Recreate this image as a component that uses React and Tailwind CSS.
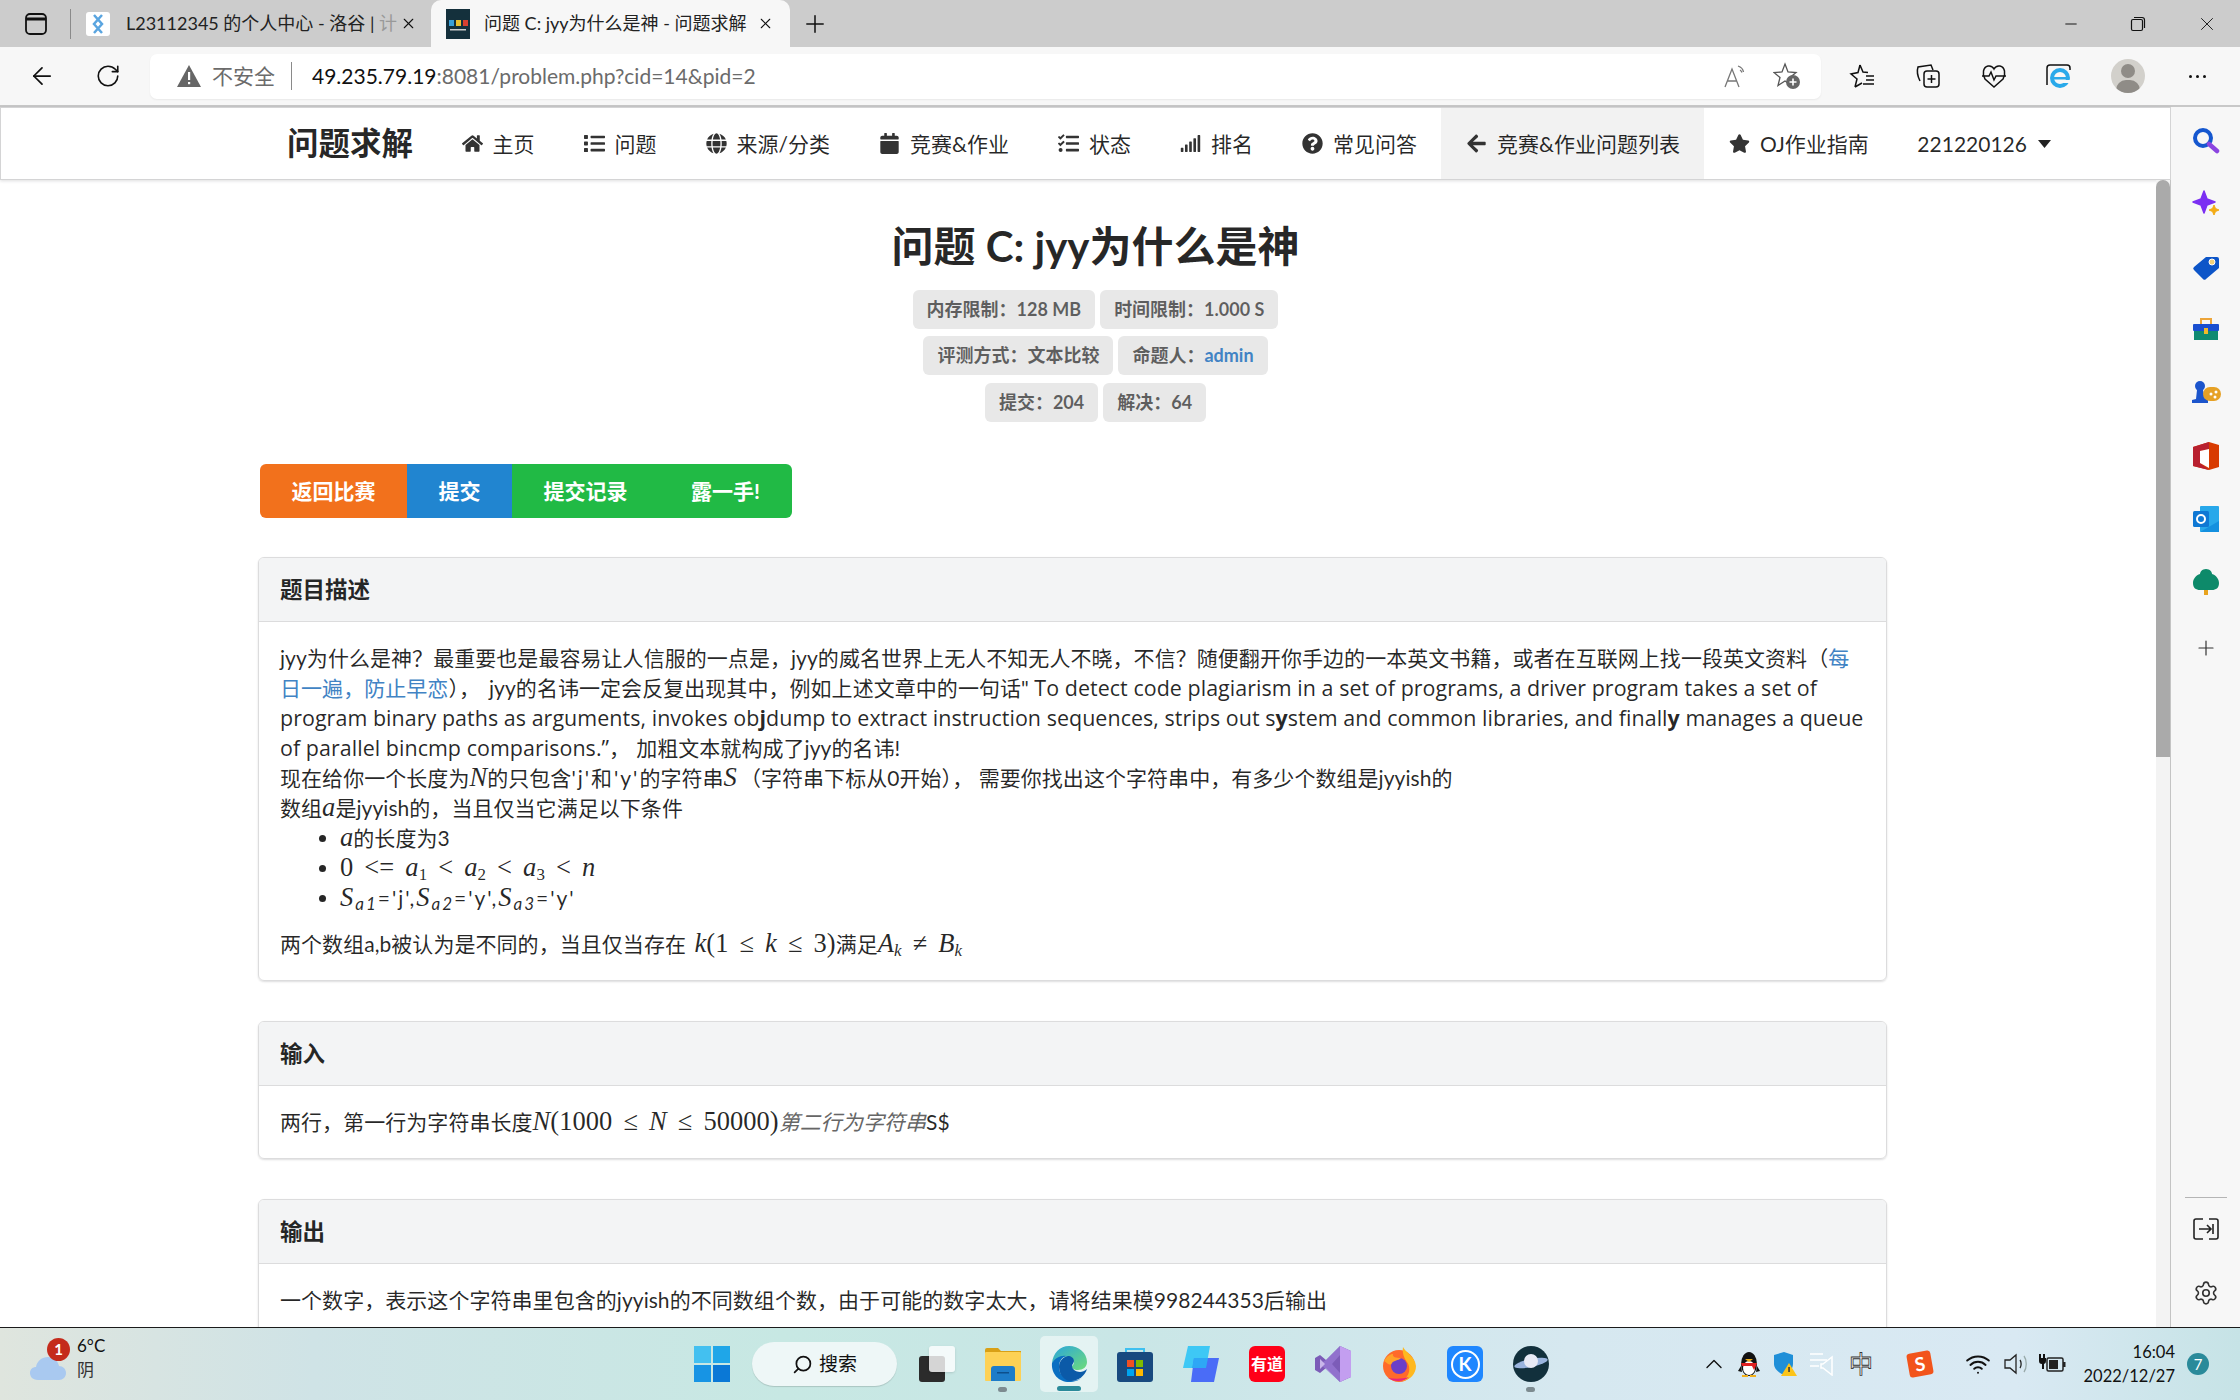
import { ArrowLeft, RotateCw, Plus, X, Minus, Search, ChevronUp, Settings, Wifi } from "lucide-react";
import {
  FaHome,
  FaList,
  FaGlobe,
  FaCalendar,
  FaTasks,
  FaSignal,
  FaQuestionCircle,
  FaArrowLeft,
  FaStar,
} from "react-icons/fa";

const navItems = [
  { icon: FaHome, label: "主页" },
  { icon: FaList, label: "问题" },
  { icon: FaGlobe, label: "来源/分类" },
  { icon: FaCalendar, label: "竞赛&作业" },
  { icon: FaTasks, label: "状态" },
  { icon: FaSignal, label: "排名" },
  { icon: FaQuestionCircle, label: "常见问答" },
  { icon: FaArrowLeft, label: "竞赛&作业问题列表", active: true },
  { icon: FaStar, label: "OJ作业指南" },
];

function M({ children, className = "" }) {
  return <span className={"[font-family:'Liberation_Serif',serif] text-[26.5px] leading-none " + className}>{children}</span>;
}

function I({ children }) {
  return <M className="italic">{children}</M>;
}

function Sub({ children }) {
  return <sub className="text-[17px] italic">{children}</sub>;
}

// relation sign with the spacing a math renderer puts round it
function Rel({ children }) {
  return <span className="mx-[11px]">{children}</span>;
}

function En({ children }) {
  return <span className="[font-family:'Open_Sans',sans-serif] text-[21.45px]">{children}</span>;
}

function Label({ children }) {
  return (
    <span className="inline-flex h-[39px] items-center rounded-[6px] bg-[#e8e8e8] px-[14px] text-[18px] font-bold text-black/60">
      {children}
    </span>
  );
}

function Card({ title, children }) {
  return (
    <section className="mb-[40px] overflow-hidden rounded-[6px] border border-[#dcdcdd] shadow-[0_1px_2px_rgba(34,36,38,0.15)]">
      <h3 className="flex h-[64px] items-center border-b border-[#dcdcdd] bg-[#f3f4f5] px-[21px] text-[22.5px] font-bold text-black/85">
        {title}
      </h3>
      <div className="p-[21px] text-[21px] leading-[30px] tracking-[0.05px] whitespace-nowrap text-black/85">{children}</div>
    </section>
  );
}

function Nav() {
  return (
    <nav className="flex h-[73px] shrink-0 items-center border border-[#d4d4d5] bg-white pl-[286px] text-[21px] text-black/85 shadow-[0_1px_3px_rgba(34,36,38,0.15)]">
      <span className="mr-[24px] text-[31.5px] font-bold">问题求解</span>
      {navItems.map(({ icon: Icon, label, active }) => (
        <a
          key={label}
          className={
            "flex h-[71px] items-center gap-[10px] px-[24.5px] " + (active ? "bg-[#f2f2f2]" : "")
          }
        >
          <Icon className="size-[21px] text-[#333]" />
          {label}
        </a>
      ))}
      <span className="ml-[24px] flex items-center gap-[11px]">
        221220126
        <svg width="13" height="8" viewBox="0 0 13 8">
          <path d="M0 0h13L6.5 8z" fill="#222" />
        </svg>
      </span>
    </nav>
  );
}

function Problem() {
  return (
    <main className="min-w-0 flex-1 overflow-hidden pt-[40px] pr-[269px] pl-[258px]">
      <div className="flex flex-col items-center pl-[46px]">
        <h1 className="mb-[18px] text-[42px] leading-[52px] font-bold text-black/85">问题 C: jyy为什么是神</h1>
        <div className="flex gap-[5px]">
          <Label>内存限制：128 MB</Label>
          <Label>时间限制：1.000 S</Label>
        </div>
        <div className="mt-[7px] flex gap-[5px]">
          <Label>评测方式：文本比较</Label>
          <Label>
            命题人：<span className="text-[#4183c4]">admin</span>
          </Label>
        </div>
        <div className="mt-[8px] flex gap-[5px]">
          <Label>提交：204</Label>
          <Label>解决：64</Label>
        </div>
      </div>

      <div className="mt-[42px] mb-[39px] ml-[2px] flex h-[54px] w-fit overflow-hidden rounded-[6px] text-[21px] font-bold text-white">
        <a className="flex items-center bg-[#f2711c] px-[31.5px]">返回比赛</a>
        <a className="flex items-center bg-[#2185d0] px-[31.5px]">提交</a>
        <a className="flex items-center bg-[#21ba45] px-[31.5px]">提交记录</a>
        <a className="flex items-center bg-[#21ba45] px-[32px]">露一手!</a>
      </div>

      <Card title="题目描述">
        <div>
          jyy为什么是神？最重要也是最容易让人信服的一点是，jyy的威名世界上无人不知无人不晓，不信？随便翻开你手边的一本英文书籍，或者在互联网上找一段英文资料（
          <a className="text-[#4183c4]">每</a>
        </div>
        <div>
          <a className="text-[#4183c4]">日一遍，防止早恋</a>），<span className="ml-[9px]">jyy的名讳一定会反复出现其中，例如上述文章中的一句话" </span>
          <En>To detect code plagiarism in a set of programs, a driver program takes a set of</En>
        </div>
        <div>
          <En>
            program binary paths as arguments, invokes ob<b>j</b>dump to extract instruction sequences, strips out s<b>y</b>stem and common libraries, and finall<b>y</b> manages a queue
          </En>
        </div>
        <div>
          <En>of parallel bincmp comparisons.”</En>，<span className="ml-[6px]">加粗文本就构成了jyy的名讳!</span>
        </div>
        <div>
          现在给你一个长度为<I>N</I>的只包含<span className="tracking-[2px]">'j'和'y'</span>的字符串
          <M className="pr-[3px] italic">S</M>（字符串下标从0开始）， 需要你找出这个字符串中，有多少个数组是jyyish的
        </div>
        <div>
          数组<I>a</I>是jyyish的，当且仅当它满足以下条件
        </div>
        <ul className="mb-[16px] list-disc pl-[60px]">
          <li>
            <I>a</I>的长度为3
          </li>
          <li>
            <M>
              0<Rel>&lt;=</Rel>
              <i>a</i>
              <sub className="text-[17px]">1</sub>
              <Rel>&lt;</Rel>
              <i>a</i>
              <sub className="text-[17px]">2</sub>
              <Rel>&lt;</Rel>
              <i>a</i>
              <sub className="text-[17px]">3</sub>
              <Rel>&lt;</Rel>
              <i>n</i>
            </M>
          </li>
          <li className="tracking-[2px]">
            <I>S</I>
            <Sub>a1</Sub>='j',<I>S</I>
            <Sub>a2</Sub>='y',<I>S</I>
            <Sub>a3</Sub>='y'
          </li>
        </ul>
        <div>
          两个数组a,b被认为是不同的，当且仅当存在{" "}
          <M className="ml-[3px]">
            <i>k</i>(1<Rel>≤</Rel>
            <i>k</i>
            <Rel>≤</Rel>3)
          </M>
          满足
          <M>
            <i>A</i>
            <Sub>k</Sub>
            <Rel>≠</Rel>
            <i>B</i>
            <Sub>k</Sub>
          </M>
        </div>
      </Card>

      <Card title="输入">
        两行，第一行为字符串长度
        <M>
          <i>N</i>(1000<Rel>≤</Rel>
          <i>N</i>
          <Rel>≤</Rel>50000)
        </M>
        <i className="text-[#666]">第二行为字符串</i>S$
      </Card>

      <Card title="输出">一个数字，表示这个字符串里包含的jyyish的不同数组个数，由于可能的数字太大，请将结果模998244353后输出</Card>
    </main>
  );
}

function Scrollbar() {
  return (
    <div className="flex w-[15px] shrink-0 flex-col border-r border-[#c4c4c4] bg-[#f3f3f3]">
      <div className="h-[577px] rounded-t-[7px] bg-[#aaaaaa]" />
    </div>
  );
}

function SideIcon({ children }) {
  return <div className="flex h-[28px] w-[36px] items-center justify-center">{children}</div>;
}

function Sidebar() {
  return (
    <aside className="flex w-[69px] shrink-0 flex-col items-center bg-[#f7f7f7] pt-[20px]">
      <div className="flex flex-col items-center gap-[35px]">
        <SideIcon>
          <svg width="28" height="28" viewBox="0 0 28 28" fill="none">
            <circle cx="11" cy="11" r="8" stroke="#1557cf" strokeWidth="4" />
            <path d="M17 17l8 7" stroke="#8b45e0" strokeWidth="4.5" strokeLinecap="round" />
          </svg>
        </SideIcon>
        <SideIcon>
          <svg width="28" height="28" viewBox="0 0 28 28">
            <path d="M12 1l3 8 8 3-8 3-3 8-3-8-8-3 8-3z" fill="#7b2ff2" stroke="#7b2ff2" strokeWidth="1.500" strokeLinejoin="round" />
            <path d="M22 15l1.500 3.500L27 20l-3.500 1.500L22 25l-1.500-3.500L17 20l3.500-1.500z" fill="#f3ac16" stroke="#f3ac16" strokeWidth="1" strokeLinejoin="round" />
          </svg>
        </SideIcon>
        <SideIcon>
          <svg width="28" height="28" viewBox="0 0 28 28">
            <path d="M14 4h11a2 2 0 0 1 2 2v9L14 26a2 2 0 0 1-3 0L2 17a2 2 0 0 1 0-3z" fill="#0d55c8" />
            <circle cx="20" cy="9" r="3" fill="#f3d27a" stroke="#fff" />
          </svg>
        </SideIcon>
        <SideIcon>
          <svg width="28" height="28" viewBox="0 0 28 28">
            <path d="M9 8V3h10v5" fill="none" stroke="#eda53a" strokeWidth="2" />
            <rect x="1" y="8" width="26" height="7" rx="1" fill="#1a4fd0" />
            <rect x="2" y="15" width="24" height="9" fill="#0f8a72" />
            <rect x="12" y="12" width="4" height="6" fill="#f3b92a" />
          </svg>
        </SideIcon>
        <SideIcon>
          <svg width="30" height="28" viewBox="0 0 30 28">
            <circle cx="9" cy="7" r="5" fill="#1c55cc" />
            <path d="M6 11h6l2 9h3v4H1v-3l4-1z" fill="#1c55cc" />
            <rect x="12" y="8" width="18" height="14" rx="7" fill="#e6a125" />
            <circle cx="20" cy="15" r="1.500" fill="#fff" />
            <circle cx="25" cy="13" r="1.500" fill="#fff" />
            <circle cx="24" cy="18" r="1.500" fill="#fff" />
          </svg>
        </SideIcon>
        <SideIcon>
          <svg width="26" height="28" viewBox="0 0 26 28">
            <path d="M16 0l10 3v22l-10 3-16-4V5z" fill="#d83b01" />
            <path d="M0 5l16-5v7L7 9v12l9 7-16-4z" fill="#b8202f" />
            <path d="M7 9l9-2v19l-9-5z" fill="#fff" />
          </svg>
        </SideIcon>
        <SideIcon>
          <svg width="26" height="26" viewBox="0 0 26 26">
            <rect x="7" y="0" width="19" height="26" rx="1" fill="#28a8ea" />
            <path d="M7 26l19-11v11z" fill="#1490df" />
            <rect x="0" y="5" width="16" height="16" rx="1.500" fill="#0f78d4" />
            <circle cx="8" cy="13" r="4" fill="none" stroke="#fff" strokeWidth="2" />
          </svg>
        </SideIcon>
        <SideIcon>
          <svg width="28" height="28" viewBox="0 0 28 28">
            <rect x="12" y="21" width="4" height="6" fill="#e8a31e" />
            <path d="M14 1c4 0 6 3 6 5 4 1 7 5 7 9 0 5-3 7-7 7H8c-4 0-7-2-7-7 0-4 3-8 7-9 0-2 2-5 6-5z" fill="#0d8a6a" />
          </svg>
        </SideIcon>
        <div className="mt-[3px]">
          <SideIcon>
            <Plus size={24} strokeWidth={1.2} className="text-[#333]" />
          </SideIcon>
        </div>
      </div>
      <div className="mt-auto flex flex-col items-center pb-[21px]">
        <div className="mb-[20px] h-px w-[42px] bg-[#b5b5b5]" />
        <svg width="26" height="22" viewBox="0 0 26 22" fill="none" stroke="#222" strokeWidth="1.600" className="mb-[40px]">
          <path d="M10 1H3a2 2 0 0 0-2 2v16a2 2 0 0 0 2 2h7M16 1h7a2 2 0 0 1 2 2v16a2 2 0 0 1-2 2h-7" />
          <path d="M6 11h12M14 7l4 4-4 4M20 6v10" />
        </svg>
        <Settings size={26} strokeWidth={1.5} className="text-[#333]" />
      </div>
    </aside>
  );
}

function TabBar() {
  return (
    <div className="flex h-[47px] shrink-0 items-center bg-[#cccccc] pl-[25px] text-[18px] text-[#222]">
      <svg width="22" height="22" viewBox="0 0 22 22" fill="none">
        <rect x="1" y="1" width="20" height="20" rx="4" stroke="#111" strokeWidth="1.800" />
        <path d="M1 6h20" stroke="#111" strokeWidth="3" />
      </svg>
      <div className="ml-[23px] h-[30px] w-px bg-[#8a8a8a]" />
      <div className="ml-[15px] flex h-[24px] w-[24px] items-center justify-center rounded-[3px] bg-white">
        <svg width="14" height="22" viewBox="0 0 14 22" fill="none" stroke="#5aa5e0" strokeWidth="2.500">
          <path d="M3 2l8 9-8 9M11 2L3 11l8 9" />
        </svg>
      </div>
      <div className="ml-[16px] w-[261px] whitespace-nowrap">
        L23112345 的个人中心 - 洛谷 | <span className="text-[#999]">计</span>
      </div>
      <X size={17} strokeWidth={1.5} className="ml-[13px] text-[#111]" />
      <div className="ml-[14px] flex h-[47px] w-[359px] items-center rounded-t-[10px] bg-[#f7f7f7] pl-[15px]">
        <svg width="24" height="30" viewBox="0 0 24 30">
          <rect width="24" height="30" fill="#14303c" />
          <rect x="3" y="11" width="5" height="6" fill="#3aa0d8" />
          <rect x="10" y="11" width="5" height="6" fill="#e8c030" />
          <rect x="17" y="11" width="5" height="6" fill="#d84030" />
          <rect x="4" y="20" width="16" height="1.500" fill="#ccc" />
        </svg>
        <span className="ml-[14px] whitespace-nowrap">问题 C: jyy为什么是神 - 问题求解</span>
        <X size={17} strokeWidth={1.5} className="ml-auto mr-[16px] text-[#111]" />
      </div>
      <Plus size={28} strokeWidth={1.3} className="ml-[11px] text-[#111]" />
      <div className="ml-auto flex items-center">
        <Minus size={18} strokeWidth={1.3} className="mr-[50px] text-[#111]" />
        <svg width="16" height="16" viewBox="0 0 16 16" fill="none" stroke="#111" strokeWidth="1.200" className="mr-[50px]">
          <rect x="1.500" y="3.500" width="11" height="11" rx="1.500" />
          <path d="M4 1.500h8a2.500 2.500 0 0 1 2.500 2.500v8" />
        </svg>
        <X size={22} strokeWidth={1} className="mr-[22px] text-[#111]" />
      </div>
    </div>
  );
}

function Toolbar() {
  return (
    <div className="flex h-[60px] shrink-0 items-center border-b-2 border-[#c8c8c8] bg-[#f7f7f7]">
      <ArrowLeft size={28} strokeWidth={1.5} className="ml-[28px] text-[#111]" />
      <RotateCw size={26} strokeWidth={1.5} className="ml-[39px] text-[#111]" />
      <div className="ml-[29px] flex h-[45px] w-[1671px] items-center rounded-[7px] bg-white pl-[27px] shadow-[0_1px_2px_rgba(0,0,0,0.06)]">
        <svg width="24" height="22" viewBox="0 0 24 22">
          <path d="M12 0l12 22H0z" fill="#666" />
          <rect x="11" y="7" width="2.200" height="8" fill="#fff" />
          <rect x="11" y="17" width="2.200" height="2.200" fill="#fff" />
        </svg>
        <span className="ml-[11px] text-[21px] text-[#6b6b6b]">不安全</span>
        <div className="ml-[16px] h-[28px] w-px bg-[#8a8a8a]" />
        <span className="ml-[20px] text-[21px] text-[#111]">
          49.235.79.19<span className="text-[#6b6b6b]">:8081/problem.php?cid=14&amp;pid=2</span>
        </span>
        <div className="ml-auto flex items-center gap-[24px] pr-[20px]">
          <svg width="26" height="26" viewBox="0 0 26 26" fill="none" stroke="#777" strokeWidth="1.300">
            <path d="M2 24L9 6l7 18M4.500 18h9" />
            <path d="M15 3c3 1 5 3 5.500 6M17 7c1 .5 1.500 1.500 2 2.500" />
          </svg>
          <svg width="28" height="28" viewBox="0 0 28 28" fill="none" stroke="#555" strokeWidth="1.300">
            <path d="M12 2l3 8 8 .5-6 5 2 8-7-4.500L5 23.500l2-8-6-5 8-.5z" />
            <circle cx="20" cy="20" r="7" fill="#666" stroke="none" />
            <path d="M20 16.500v7M16.500 20h7" stroke="#fff" strokeWidth="1.600" />
          </svg>
        </div>
      </div>
      <div className="ml-[28px] flex items-center text-[#111]">
        <svg width="26" height="26" viewBox="0 0 26 26" fill="none" stroke="#111" strokeWidth="1.500" className="mr-[40px]">
          <path d="M11 2l3 7 5 .5M6 24l2-8-6-5 7-1.500L11 2M6 24l7-4" />
          <path d="M17 13h8M17 17h8M14 21h11" />
        </svg>
        <svg width="26" height="26" viewBox="0 0 26 26" fill="none" stroke="#111" strokeWidth="1.500" className="mr-[40px]">
          <path d="M5 18C2 12 2 7 3 4l13-2 2 5" />
          <rect x="9" y="8" width="15" height="16" rx="3" />
          <path d="M16.500 12v8M12.500 16h8" />
        </svg>
        <svg width="26" height="26" viewBox="0 0 26 26" fill="none" stroke="#111" strokeWidth="1.500" className="mr-[39px]">
          <path d="M4 16C1 11 2 4 7 3c3-.5 5 1 6 3 1-2 3-3.500 6-3 5 1 6 8 3 13l-9 8z" />
          <path d="M1 13h7l2-4 3 8 2-4h10" />
        </svg>
        <svg width="26" height="26" viewBox="0 0 26 26" className="mr-[39px]">
          <path d="M1 22V5a3 3 0 0 1 3-3h17a3 3 0 0 1 3 3v2" fill="none" stroke="#111" strokeWidth="1.500" />
          <circle cx="14" cy="15" r="8" fill="none" stroke="#29a9ea" strokeWidth="4" />
          <rect x="8" y="14" width="13" height="2.500" fill="#29a9ea" />
          <rect x="16" y="17" width="8" height="3" fill="#f7f7f7" />
        </svg>
        <div className="relative mr-[44px] size-[34px] overflow-hidden rounded-full bg-[#d2d0cb]">
          <div className="absolute top-[5px] left-[10px] size-[14px] rounded-full bg-[#8f8c87]" />
          <div className="absolute top-[21px] left-[5px] h-[20px] w-[24px] rounded-full bg-[#8f8c87]" />
        </div>
        <div className="flex gap-[4px]">
          <div className="size-[3px] rounded-full bg-[#111]" />
          <div className="size-[3px] rounded-full bg-[#111]" />
          <div className="size-[3px] rounded-full bg-[#111]" />
        </div>
      </div>
    </div>
  );
}

function AppSlot({ children, dot }) {
  return (
    <div className="relative flex h-[56px] w-[66px] items-center justify-center">
      {children}
      {dot && <div className="absolute bottom-0 left-[28px] h-[5px] w-[9px] rounded-full bg-[#7d8b90]" />}
    </div>
  );
}

function EdgeLogo() {
  return (
    <svg width="36" height="36" viewBox="0 0 36 36">
      <defs>
        <linearGradient id="edgeTop" x1="0" y1="0" x2="1" y2="1">
          <stop offset="0" stopColor="#2aa5dc" />
          <stop offset="1" stopColor="#6fdc7a" />
        </linearGradient>
      </defs>
      <path d="M1 17C2 7 9 0 18 0c10 0 18 7 18 16 0 5-4 8-9 8-4 0-7-2-6-4 1-1 2-2 2-4 0-4-5-6-10-5C7 12 3 14 1 17z" fill="url(#edgeTop)" />
      <path d="M1 17c3-5 9-8 14-7-5 2-7 6-7 11 0 6 4 11 10 13 6 1 11 0 14-3-3 3-9 5-14 5C8 36 0 28 1 17z" fill="#0a6fc2" />
      <path d="M8 21c0-6 4-10 9-11 3 0 6 2 6 5 0 2-2 3-2 5 0 3 4 6 8 6 2 0 5-1 7-3-2 7-9 12-16 12C14 35 8 29 8 21z" fill="#0b5aa8" />
    </svg>
  );
}

function Taskbar() {
  return (
    <footer className="flex h-[73px] shrink-0 items-center border-t border-[#1b1b1b] bg-[linear-gradient(90deg,#dfe5de_0%,#cfe3e6_14%,#c7e8e3_35%,#c9e6e6_50%,#d6e8f0_70%,#d9e9f3_90%,#c6e3e6_100%)] text-[#111]">
      <div className="relative ml-[30px] w-[649px] shrink-0">
        <svg width="36" height="24" viewBox="0 0 36 24" className="mt-[8px]">
          <path d="M8 24C2 24 0 20 0 17c0-4 3-6 6-6 1-6 6-10 12-10 6 0 10 4 11 9 4 0 7 3 7 7s-3 7-7 7z" fill="#a9c9f0" />
        </svg>
        <div className="absolute top-[-10px] left-[17px] flex size-[23px] items-center justify-center rounded-full bg-[#c42b1c] text-[15px] font-bold text-white">
          1
        </div>
        <div className="absolute top-[-14px] left-[47px] text-[17px] leading-[24px]">
          6°C
          <div className="text-[#333]">阴</div>
        </div>
      </div>
      <AppSlot>
        <svg width="36" height="36" viewBox="0 0 36 36">
          <rect width="17" height="17" fill="#43c0f0" />
          <rect x="19" width="17" height="17" fill="#1fa6e8" />
          <rect y="19" width="17" height="17" fill="#1794e4" />
          <rect x="19" y="19" width="17" height="17" fill="#0a78d6" />
        </svg>
      </AppSlot>
      <div className="ml-[7px] flex h-[44px] w-[145px] items-center justify-center gap-[6px] rounded-full bg-[#eef7f7] text-[19px] shadow-[0_1px_1px_rgba(0,0,0,0.15)]">
        <Search size={21} strokeWidth={2} className="-scale-x-100" />
        搜索
      </div>
      <div className="ml-[7px] flex">
        <AppSlot>
          <div className="relative size-[36px]">
            <div className="absolute bottom-0 left-0 size-[26px] rounded-[3px] bg-[#2b2b2b]" />
            <div className="absolute top-0 right-0 size-[26px] rounded-[3px] bg-white/80 shadow-sm" />
          </div>
        </AppSlot>
        <AppSlot dot>
          <svg width="36" height="34" viewBox="0 0 36 34">
            <path d="M0 3a2 2 0 0 1 2-2h11l3 3h20v4H0z" fill="#d9a016" />
            <rect y="5" width="36" height="29" rx="1" fill="#fdd155" />
            <path d="M6 34V22a3 3 0 0 1 3-3h18a3 3 0 0 1 3 3v12z" fill="#1d7cc9" />
            <rect x="12" y="25" width="12" height="1.500" fill="#0d4f8c" />
          </svg>
        </AppSlot>
        <div className="relative flex h-[56px] w-[66px] items-center justify-center">
          <div className="absolute inset-x-[4px] inset-y-0 rounded-[5px] bg-white/50" />
          <div className="relative">
            <EdgeLogo />
          </div>
          <div className="absolute bottom-[1px] left-[21px] h-[5px] w-[24px] rounded-full bg-[#2a8a9a]" />
        </div>
        <AppSlot>
          <svg width="36" height="36" viewBox="0 0 36 36">
            <path d="M9 9V3h18v6" fill="none" stroke="#3fc0f0" strokeWidth="2" />
            <rect y="6" width="36" height="30" rx="3" fill="#18497f" />
            <rect x="10" y="14" width="7" height="7" fill="#f25022" />
            <rect x="19" y="14" width="7" height="7" fill="#7fba00" />
            <rect x="10" y="23" width="7" height="7" fill="#00a4ef" />
            <rect x="19" y="23" width="7" height="7" fill="#ffb900" />
          </svg>
        </AppSlot>
        <AppSlot>
          <svg width="36" height="36" viewBox="0 0 36 36">
            <path d="M5 0h22l-4 22H0z" fill="#3ec8f5" />
            <path d="M11 12h25l-5 24H8z" fill="#4a6cf7" />
            <path d="M11 12h14l-2 10H9z" fill="#2ea7f5" />
          </svg>
        </AppSlot>
        <AppSlot>
          <div className="flex size-[36px] items-center justify-center rounded-[6px] bg-[#ff0018] text-[16px] font-bold whitespace-nowrap text-white">
            有道
          </div>
        </AppSlot>
        <AppSlot>
          <svg width="36" height="36" viewBox="0 0 36 36">
            <path d="M25 0l11 5v26l-11 5L11 22l-6 5-5-3V12l5-3 6 5z" fill="#7c5cb8" />
            <path d="M25 0l11 5v26l-11 5z" fill="#c39ef0" />
            <path d="M11 14L25 0v9l-8 9 8 9v9L5 18z" fill="#9a7bd6" opacity="0.7" />
            <path d="M5 13l5 5-5 5z" fill="#c9b6ea" />
          </svg>
        </AppSlot>
        <AppSlot>
          <svg width="36" height="36" viewBox="0 0 36 36">
            <circle cx="18" cy="20" r="16" fill="#ff6a2b" />
            <path d="M22 1c2 5 12 9 13 19 0 8-6 14-14 15 8-4 9-14 5-19-3-4-5-9-4-15z" fill="#ffb81f" />
            <circle cx="18" cy="20" r="8" fill="#6b3fc8" />
            <path d="M3 15c3-5 6-7 9-7-1 3 3 4 8 4-3 3-7 2-9 5-2 3-4 1-8-2z" fill="#ffa22a" />
            <path d="M7 32c6 4 16 4 21-1-6 2-14 2-21 1z" fill="#e8257d" />
          </svg>
        </AppSlot>
        <AppSlot>
          <div className="flex size-[36px] items-center justify-center rounded-[6px] bg-[#1f87ff]">
            <div className="flex size-[29px] items-center justify-center rounded-full border-2 border-white text-[19px] font-bold text-white">
              K
            </div>
          </div>
        </AppSlot>
        <AppSlot dot>
          <svg width="36" height="36" viewBox="0 0 36 36">
            <circle cx="18" cy="18" r="18" fill="#12303c" />
            <ellipse cx="18" cy="17" rx="17" ry="4" fill="#9ab4de" transform="rotate(-12 18 17)" />
            <circle cx="18" cy="15" r="7" fill="#e8eaf5" />
          </svg>
        </AppSlot>
      </div>
      <div className="ml-[136px] flex items-center">
        <ChevronUp size={28} strokeWidth={1.200} className="text-[#111]" />
        <svg width="22" height="26" viewBox="0 0 22 26" className="ml-[10px]">
          <path d="M3 15l-3 5 4 1zM19 15l3 5-4 1z" fill="#111" />
          <ellipse cx="11" cy="13" rx="8" ry="12" fill="#111" />
          <ellipse cx="11" cy="17" rx="6" ry="7" fill="#fff" />
          <path d="M3 12h16l-1 3-2 4-2-4H4z" fill="#e02020" />
          <path d="M7 8h8l-4 3z" fill="#f3b019" />
          <path d="M4 24h6v2H4zM12 24h6v2h-6z" fill="#f3b019" />
        </svg>
        <svg width="24" height="24" viewBox="0 0 24 24" className="ml-[13px]">
          <path d="M11 0l9 3v9c0 5-4 9-9 11C6 21 1 17 1 12V3z" fill="#1f8fd8" />
          <path d="M16 11l8 13H8z" fill="#fcc419" />
          <rect x="15.300" y="15" width="1.500" height="5" fill="#333" />
        </svg>
        <svg width="24" height="24" viewBox="0 0 24 24" fill="none" stroke="#fff" strokeWidth="1.500" className="ml-[13px]">
          <path d="M0 2h13M0 8h17M0 14h9" />
          <path d="M13 12l9-7v18l-9-7h-2v-4z" />
        </svg>
        <div className="ml-[14px] flex w-[26px] justify-center text-[24px] leading-none text-white [-webkit-text-stroke:0.8px_#333]">
          中
        </div>
        <div className="ml-[34px] flex size-[24px] rotate-[-10deg] items-center justify-center rounded-[3px] bg-[#f2541b] text-[19px] font-bold text-white">
          S
        </div>
        <Wifi size={26} strokeWidth={1.800} className="ml-[33px] text-[#111]" />
        <svg width="26" height="24" viewBox="0 0 26 24" fill="none" stroke="#222" strokeWidth="1.300" className="ml-[13px]">
          <path d="M1 8h5l6-5v18l-6-5H1z" />
          <path d="M16 8c1.500 2 1.500 6 0 8" />
          <path d="M20 4c3 4 3 12 0 16" stroke="#9aa" />
        </svg>
        <svg width="28" height="22" viewBox="0 0 28 22" className="ml-[8px]">
          <path d="M1 1h2v4h2V1h2v4h1v3a3 3 0 0 1-2 3v5H4v-5a3 3 0 0 1-3-3z" fill="#111" />
          <rect x="9" y="5" width="16" height="13" rx="1.500" fill="none" stroke="#222" strokeWidth="1.500" />
          <rect x="11" y="7" width="9" height="9" fill="#222" />
          <rect x="25" y="9" width="2.500" height="5" fill="#222" />
        </svg>
      </div>
      <div className="ml-auto flex w-[98px] flex-col items-end text-[16.5px] leading-[24px]">
        <span>16:04</span>
        <span>2022/12/27</span>
      </div>
      <div className="mr-[31px] ml-[12px] flex size-[22px] items-center justify-center rounded-full bg-[#2a8a9a] text-[15px] text-white">
        7
      </div>
    </footer>
  );
}

export default function App() {
  return (
    <div className="flex h-[1400px] w-[2240px] flex-col overflow-hidden bg-white [font-family:Lato,'Noto_Sans_CJK_SC',sans-serif]">
      <TabBar />
      <Toolbar />
      <div className="flex min-h-0 flex-1">
        <div className="flex min-w-0 flex-1 flex-col">
          <Nav />
          <div className="flex min-h-0 flex-1">
            <Problem />
            <Scrollbar />
          </div>
        </div>
        <Sidebar />
      </div>
      <Taskbar />
    </div>
  );
}
